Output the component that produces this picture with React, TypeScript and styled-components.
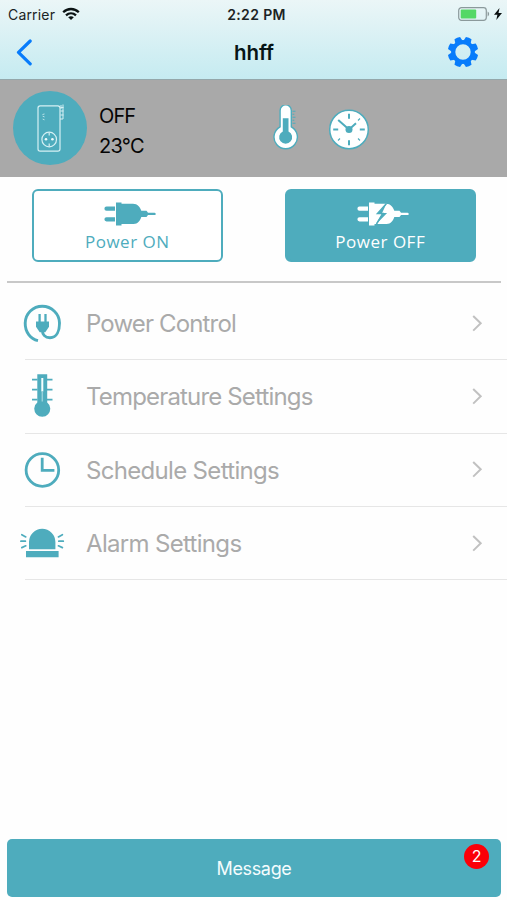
import React from "react";
import styled, { createGlobalStyle } from "styled-components";

const TEAL = "#4eacbd";
const BLUE = "#087cfb";

const GlobalStyle = createGlobalStyle`
  * { box-sizing: border-box; }
  body { margin: 0; background: #fff; }
  button { font: inherit; color: inherit; border: 0; padding: 0; background: none; }
  svg { display: block; flex: none; }
`;

const Screen = styled.main`
  width: 507px;
  height: 900px;
  display: flex;
  flex-direction: column;
  background: #fefefe;
  font-family: Inter, "Liberation Sans", sans-serif;
  overflow: hidden;
`;

const Header = styled.header`
  height: 79px;
  flex: none;
  background: linear-gradient(#ebf6f7, #c5ebf1);
`;

const StatusBar = styled.div`
  height: 27px;
  display: grid;
  grid-template-columns: 1fr auto 1fr;
  align-items: center;
  padding: 0 5px 0 8px;
  color: #1b2324;
`;

const StatusGroup = styled.div<{ $end?: boolean }>`
  display: flex;
  align-items: center;
  gap: ${(p) => (p.$end ? 4 : 7)}px;
  justify-content: ${(p) => (p.$end ? "flex-end" : "flex-start")};
`;

const Carrier = styled.span`
  font-size: 14px;
  line-height: 27px;
  letter-spacing: 0.17px;
`;

const Time = styled.span`
  font-size: 14px;
  font-weight: 600;
  line-height: 27px;
  letter-spacing: 0.35px;
  margin: 1px 0 0 3px;
`;

const NavBar = styled.div`
  height: 52px;
  display: grid;
  grid-template-columns: 1fr auto 1fr;
  align-items: center;
  padding: 0 28px 2px 15px;
`;

const NavButton = styled.button<{ $end?: boolean }>`
  justify-self: ${(p) => (p.$end ? "end" : "start")};
`;

const Title = styled.h1`
  margin: 2px 0 0 14px;
  font-size: 20.5px;
  font-weight: 600;
  line-height: 26px;
  color: #071516;
`;

const DeviceStrip = styled.section`
  height: 98px;
  flex: none;
  display: flex;
  align-items: center;
  padding: 0 0 2px 13px;
  border-top: 1px solid #94a7aa;
  background: #a9a9a9;
`;

const Readings = styled.div`
  width: 184px;
  padding: 6px 0 0 12px;
  font-size: 20px;
  line-height: 30px;
  color: #050505;
`;

const Reading = styled.div<{ $spacing: number }>`
  letter-spacing: ${(p) => p.$spacing}px;
`;

const ModeIcons = styled.div`
  display: flex;
  gap: 27px;
  padding-top: 2px;
`;

const Actions = styled.section`
  height: 103.5px;
  flex: none;
  display: flex;
  gap: 62.5px;
  padding: 12px 31px 0 32px;
`;

const PowerButton = styled.button<{ $filled?: boolean }>`
  width: 190.5px;
  height: 73px;
  display: flex;
  flex-direction: column;
  align-items: center;
  padding-top: 10.5px;
  border: 2px solid ${TEAL};
  border-radius: 6px;
  background: ${(p) => (p.$filled ? TEAL : "#fff")};
  color: ${(p) => (p.$filled ? "#fff" : TEAL)};
`;

const PlugArt = styled.svg`
  margin-left: 5px;
`;

const PowerLabel = styled.span`
  font-family: "Open Sans", "Noto Sans", sans-serif;
  font-size: 17px;
  line-height: 24px;
  margin-top: 4.5px;
  letter-spacing: 0.5px;
`;

const Divider = styled.hr`
  width: 494px;
  height: 2px;
  flex: none;
  margin: 0 0 0 7px;
  border: 0;
  background: #c8c8c8;
`;

const Menu = styled.nav`
  flex: 1;
  padding: 4.5px 0 0 25px;
`;

const MenuRow = styled.button`
  width: 482px;
  height: 73.33px;
  display: flex;
  align-items: center;
  padding-right: 24px;
  border-bottom: 1px solid #e6e6e6;
`;

const RowIcon = styled.span`
  margin-left: -7px;
`;

const RowLabel = styled.span<{ $spacing: number }>`
  flex: 1;
  padding: 2px 0 0 20px;
  text-align: left;
  font-size: 24px;
  line-height: 32px;
  letter-spacing: ${(p) => p.$spacing}px;
  color: #aaa;
`;

const Footer = styled.footer`
  padding: 0 6px 3px 7px;
`;

const MessageButton = styled.button`
  position: relative;
  width: 100%;
  height: 58px;
  padding-top: 1px;
  border-radius: 5px;
  background: ${TEAL};
  color: #f4fcfd;
  font-size: 18px;
  line-height: 58px;
  letter-spacing: -0.35px;
  display: block;
`;

const Badge = styled.span`
  position: absolute;
  top: 5px;
  right: 12px;
  width: 25px;
  height: 25px;
  border-radius: 50%;
  background: #fb0008;
  color: #fff;
  font-size: 16px;
  line-height: 25px;
  text-align: center;
`;

const Wifi = () => (
  <svg width="18" height="14" viewBox="0 0 18 14" fill="none" stroke="#0b1314" strokeWidth="2.3">
    <path d="M1.2 5.2C5.6.9 12.4.9 16.8 5.2" />
    <path d="M4 8.3c2.9-2.7 7.1-2.7 10 0" />
    <path d="M6.2 10.3c1.7-1.4 3.9-1.4 5.6 0L9 13Z" fill="#0b1314" stroke="none" />
  </svg>
);

const Battery = () => (
  <svg width="32" height="14" viewBox="0 0 32 14">
    <rect x=".7" y=".7" width="27.6" height="12.6" rx="2.8" fill="none" stroke="#8b999b" strokeWidth="1.2" />
    <rect x="2.7" y="2.5" width="15.5" height="9" rx="1" fill="#54d866" />
    <path d="M29.6 4.6c2 .8 2 4 0 4.8Z" fill="#8b999b" />
  </svg>
);

const Charge = () => (
  <svg width="8" height="12" viewBox="0 0 8 12">
    <path d="M5.5 0 0 6.8h3.4L2.3 12 8 5.1H4.5Z" fill="#0a1011" />
  </svg>
);

const Back = () => (
  <svg width="18" height="28" viewBox="0 0 18 28">
    <path d="M15.2 3 3.5 14.4l11.7 11.4" fill="none" stroke={BLUE} strokeWidth="3.2" strokeLinecap="round" strokeLinejoin="round" />
  </svg>
);

const Gear = () => (
  <svg width="32" height="32" viewBox="-16 -16 32 32" fill="none" stroke={BLUE}>
    <circle r="9.8" strokeWidth="4.2" />
    {[22.5, 67.5, 112.5, 157.5, 202.5, 247.5, 292.5, 337.5].map((a) => (
      <path key={a} transform={`rotate(${a})`} d="M-3.8-10.8-3-15q3-.7 6 0l.8 4.2Z" fill={BLUE} stroke="none" />
    ))}
  </svg>
);

const Device = () => (
  <svg width="74" height="74" viewBox="0 0 74 74" fill="none" stroke="#d5f0f4" strokeWidth="1.2">
    <circle cx="37" cy="37" r="37" fill={TEAL} stroke="none" />
    <rect x="25" y="14.8" width="22" height="45.4" rx="2.2" />
    <circle cx="36.2" cy="48.5" r="7.3" />
    <path d="M36.2 41.5v3m0 8v3" />
    <g fill="#eefafb" stroke="none">
      <circle cx="33" cy="48.3" r="1.3" />
      <circle cx="39.4" cy="48.3" r="1.3" />
    </g>
    <path d="M48 14v4m2-4.5V28h-3M47.5 16.5h3m-3 3.5h3m-3 4h3" strokeWidth="1" />
    <path d="M29.5 23.5l2-.5m-1.8 2.2 1.8.7m-1.8 2.2 1.8.7" strokeWidth=".8" />
  </svg>
);

const StripThermometer = () => (
  <svg width="30" height="48" viewBox="0 0 30 48">
    <path d="M9.100 22.500V6.200a5.600 5.600 0 0 1 11.200 0v16.300a11.700 11.700 0 1 1-11.200 0Z" transform="translate(0 -.700)" fill="#fff" stroke={TEAL} strokeWidth="1.400" />
    <path d="M11.800 13.200h5.700v13.200a6.500 6.500 0 1 1-5.700 0Z" fill={TEAL} />
    <path d="M21.500 6.200h3m-3 3h1.800m-1.800 3h3m-3 3h1.800m-1.800 3h3" stroke={TEAL} strokeWidth="1.100" />
  </svg>
);

const StripClock = () => (
  <svg width="42" height="48" viewBox="-21 -24.5 42 48" stroke={TEAL} fill="none">
    <circle r="19.3" fill="#fff" strokeWidth="1.5" />
    <path d="M0-15.8v5m0 21.6v5M-15.8 0h5m21.6 0h5" strokeWidth="2" />
    <path d="m9-9 2-2m-2 20 2 2M-9 9l-2 2" strokeWidth="1.1" />
    <path d="M0 0-10.8-9.5M0 0l7-6.2" strokeWidth="2" />
    <circle r="3.5" fill={TEAL} stroke="none" />
  </svg>
);

const Plug = ({ bolt = false }: { bolt?: boolean }) => (
  <PlugArt width="52" height="24" viewBox="0 0 52 24" fill="currentColor">
    <path d="M2.5 4.6h8.5v4.2H2.5a2.1 2.1 0 0 1 0-4.2Zm0 10.6h8.5v4.2H2.5a2.1 2.1 0 0 1 0-4.2Z" />
    <path d="M12 .4h5.5v1.4H29c4.5 0 7.3 3.5 8.3 7h5.2l1.500 1.900h6.500a1.200 1.200 0 0 1 0 2.400H44l-1.500 1.900h-5.200c-1 3.500-3.800 7.400-8.300 7H17.500v1.500H12Z" />
    {bolt && (
      <g>
        <path d="m29.500 1.600-9 10h5.200L19.500 22" fill="none" stroke={TEAL} strokeWidth="1.500" />
        <path d="m29.500 1.600-9 10.100h4.600L18.400 23l11.700-11.900h-5Z" fill={TEAL} />
      </g>
    )}
  </PlugArt>
);

const PowerControlIcon = () => (
  <svg width="48" height="48" viewBox="0 0 48 48" fill="none" stroke={TEAL}>
    <path d="M20 41.7C12.500 40 7 33 7.200 24 7.500 14.400 15 7.300 24.300 7.300S41.500 14.800 41.500 24c0 7.500-2.500 14.700-9.500 14.700-5 0-7.600-3.200-7.600-7.200" strokeWidth="2.900" />
    <path d="M21.600 15v8.500m5.900-8.500v8.500" strokeWidth="2.300" />
    <path d="M18 22.500h13v5.200l-3.700 5.500h-5.600L18 27.700Z" fill={TEAL} stroke="none" />
  </svg>
);

const TemperatureIcon = () => (
  <svg width="48" height="48" viewBox="0 0 48 48">
    <path d="M19.300 2.300h9.900v28.200a8 8 0 1 1-9.900 0Z" fill={TEAL} />
    <path d="M14 7.600h5.500m9.500 0h5.500M14 17.600h5.500m9.500 0h5.500M14 27.600h5.500m9.500 0h5.500" stroke={TEAL} strokeWidth="1.900" />
    <path d="M24.300 6v13.500" stroke="#f5ffff" strokeWidth="2" />
    <path d="M24.300 19.500v10" stroke="#95d0da" strokeWidth="1.500" />
  </svg>
);

const ScheduleIcon = () => (
  <svg width="48" height="48" viewBox="0 0 48 48" fill="none" stroke={TEAL}>
    <circle cx="24.400" cy="24" r="16.300" strokeWidth="2.800" />
    <path d="M24.200 11.800v12.600h12.200" strokeWidth="2.800" />
  </svg>
);

const AlarmIcon = () => (
  <svg width="48" height="48" viewBox="0 0 48 48" fill={TEAL}>
    <path d="M11 30.300V23a13.200 13.200 0 0 1 26.400 0v7.300ZM8 32h32.600v6.200H8Z" />
    <path d="m3.800 15.700 4 2.200M2.900 22.200h4.500M3.800 28.600l4-1.800m36.600-11.100-4 2.200m4.900 4.300h-4.500m3.600 6.400-4-1.800" stroke={TEAL} strokeWidth="1.700" strokeLinecap="round" />
  </svg>
);

const Chevron = () => (
  <svg width="12" height="17" viewBox="0 0 12 17">
    <path d="m2.200 1 7.500 7.300-7.500 7.300" fill="none" stroke="#c1c1c1" strokeWidth="2" />
  </svg>
);

const items = [
  { label: "Power Control", icon: <PowerControlIcon />, spacing: -0.85 },
  { label: "Temperature Settings", icon: <TemperatureIcon />, spacing: -0.83 },
  { label: "Schedule Settings", icon: <ScheduleIcon />, spacing: -0.68 },
  { label: "Alarm Settings", icon: <AlarmIcon />, spacing: -0.68 },
];

export default function App() {
  return (
    <Screen>
      <GlobalStyle />
      <Header>
        <StatusBar>
          <StatusGroup><Carrier>Carrier</Carrier><Wifi /></StatusGroup>
          <Time>2:22 PM</Time>
          <StatusGroup $end><Battery /><Charge /></StatusGroup>
        </StatusBar>
        <NavBar>
          <NavButton aria-label="Back"><Back /></NavButton>
          <Title>hhff</Title>
          <NavButton $end aria-label="Settings"><Gear /></NavButton>
        </NavBar>
      </Header>
      <DeviceStrip>
        <Device />
        <Readings>
          <Reading $spacing={-0.9}>OFF</Reading>
          <Reading $spacing={-0.7}>23°C</Reading>
        </Readings>
        <ModeIcons><StripThermometer /><StripClock /></ModeIcons>
      </DeviceStrip>
      <Actions>
        <PowerButton><Plug /><PowerLabel>Power ON</PowerLabel></PowerButton>
        <PowerButton $filled><Plug bolt /><PowerLabel>Power OFF</PowerLabel></PowerButton>
      </Actions>
      <Divider />
      <Menu>
        {items.map((item) => (
          <MenuRow key={item.label}>
            <RowIcon>{item.icon}</RowIcon>
            <RowLabel $spacing={item.spacing}>{item.label}</RowLabel>
            <Chevron />
          </MenuRow>
        ))}
      </Menu>
      <Footer>
        <MessageButton>Message<Badge>2</Badge></MessageButton>
      </Footer>
    </Screen>
  );
}
